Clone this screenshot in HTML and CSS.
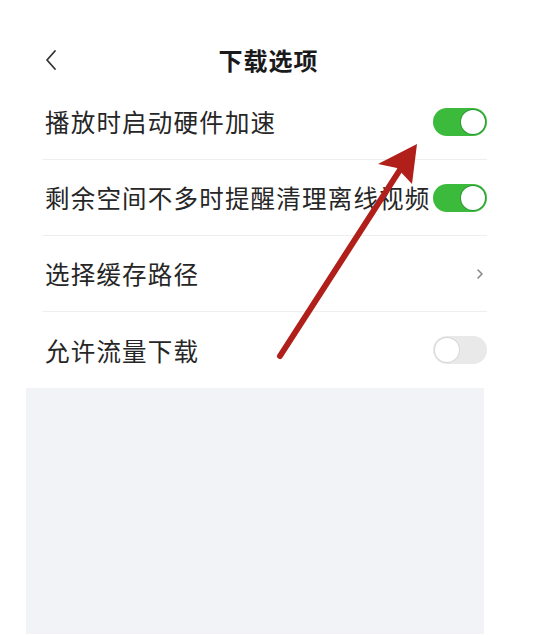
FILE: index.html
```html
<!DOCTYPE html>
<html lang="zh">
<head>
<meta charset="utf-8">
<link rel="stylesheet" href="styles.css">
</head>
<body>
<div class="page">
  <header class="header">
    <svg class="back" width="14" height="22" viewBox="0 0 14 22"><path d="M11 2 L3 11 L11 20" fill="none" stroke="#333" stroke-width="1.8" stroke-linecap="round" stroke-linejoin="round"/></svg>
    <h1 class="title">下载选项</h1>
  </header>
  <div class="list">
    <div class="row"><span class="label">播放时启动硬件加速</span><span class="toggle on"><span class="knob"></span></span></div>
    <div class="row"><span class="label">剩余空间不多时提醒清理离线视频</span><span class="toggle on"><span class="knob"></span></span></div>
    <div class="row"><span class="label">选择缓存路径</span><svg class="chev" width="8" height="12" viewBox="0 0 8 12"><path d="M2 2 L6 6 L2 10" fill="none" stroke="#888" stroke-width="1.6" stroke-linecap="round" stroke-linejoin="round"/></svg></div>
    <div class="row last"><span class="label">允许流量下载</span><span class="toggle"><span class="knob"></span></span></div>
  </div>
  <div class="panel"></div>
  <svg class="arrow" width="547" height="635" viewBox="0 0 547 635">
    <line x1="280" y1="356" x2="405" y2="162" stroke="#b01f1a" stroke-width="6" stroke-linecap="round"/>
    <polygon points="417,144 378,164 397,168 412,184" fill="#b01f1a"/>
  </svg>
</div>
</body>
</html>
```

FILE: styles.css
```css
html, body {
  margin: 0;
  padding: 0;
  background: #ffffff;
}
.page {
  position: relative;
  width: 547px;
  height: 635px;
  overflow: hidden;
  font-family: "Noto Sans CJK SC", "Noto Sans", sans-serif;
  color: #222;
}
.header {
  position: relative;
  height: 84px;
  box-sizing: border-box;
  padding-top: 44px;
  padding-right: 10px;
  display: flex;
  justify-content: center;
}
.back {
  position: absolute;
  left: 44px;
  top: 49px;
}
.title {
  margin: 0;
  font-size: 24px;
  line-height: 32px;
  font-weight: 700;
  letter-spacing: 1px;
  color: #1a1a1a;
}
.list {
  margin: 0 60px 0 43px;
}
.row {
  height: 76px;
  box-sizing: border-box;
  border-bottom: 1px solid #eeeeee;
  display: flex;
  align-items: center;
  justify-content: space-between;
  padding-left: 2px;
}
.row.last {
  border-bottom: none;
}
.label {
  font-size: 24.5px;
  letter-spacing: 1.2px;
  color: #262626;
  white-space: nowrap;
}
.toggle {
  position: relative;
  width: 54px;
  height: 28px;
  border-radius: 14px;
  background: #e9e9ea;
  box-sizing: border-box;
  flex: none;
}
.toggle.on {
  background: #3cba3c;
}
.knob {
  position: absolute;
  top: 2px;
  left: 2px;
  width: 24px;
  height: 24px;
  border-radius: 50%;
  background: #fff;
  box-shadow: 0 0 0 1px #d8d8d8;
}
.toggle.on .knob {
  left: auto;
  right: 2px;
  box-shadow: 0 0 0 1px #2e9a35;
}
.chev {
  margin-right: 3px;
}
.panel {
  margin: 0 63px 0 26px;
  height: 246px;
  background: #f2f3f7;
}
.arrow {
  position: absolute;
  left: 0;
  top: 0;
  pointer-events: none;
}
```
